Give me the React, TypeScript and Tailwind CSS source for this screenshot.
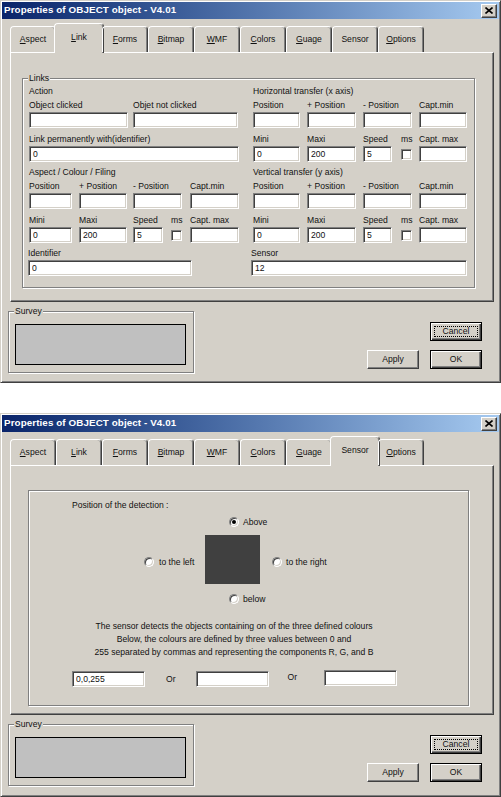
import React from "react";

const raised =
  "border border-t-white border-l-white border-r-[#404040] border-b-[#404040] shadow-[inset_-1px_-1px_0_#808080]";
const sunken =
  "border border-t-[#808080] border-l-[#808080] border-r-white border-b-white shadow-[inset_1px_1px_0_#404040,inset_-1px_-1px_0_#d4d0c8]";
const etched = "border border-[#808080] shadow-[1px_1px_0_#fff,inset_1px_1px_0_#fff]";

const TABS: [string, string][] = [
  ["A", "spect"],
  ["L", "ink"],
  ["F", "orms"],
  ["B", "itmap"],
  ["W", "MF"],
  ["C", "olors"],
  ["G", "uage"],
  ["", "Sensor"],
  ["O", "ptions"],
];

const TextBox = ({ className = "", value = "" }: { className?: string; value?: string }) => (
  <input
    readOnly
    value={value}
    className={`h-[16px] bg-white pl-[3px] text-[8.6px] leading-[14px] outline-none ${sunken} ${className}`}
  />
);

const Field = ({ wrap = "", label, input, value }: { wrap?: string; label: string; input: string; value?: string }) => (
  <div className={wrap}>
    <div className="h-[14px] leading-[14px] whitespace-nowrap">{label}</div>
    <TextBox className={input} value={value} />
  </div>
);

const Ms = ({ wrap }: { wrap: string }) => (
  <div className={wrap}>
    <div className="h-[14px] leading-[14px]">ms</div>
    <div className="h-[16px] flex items-center">
      <div className={`w-[11px] h-[11px] bg-white ${sunken}`} />
    </div>
  </div>
);

const Radio = ({ checked = false }: { checked?: boolean }) => (
  <div
    className={`w-[10px] h-[10px] shrink-0 rounded-full bg-white flex items-center justify-center ${sunken}`}
  >
    {checked && <div className="w-[4px] h-[4px] rounded-full bg-black" />}
  </div>
);

const Btn = ({ label, focus = false, dflt = false }: { label: string; focus?: boolean; dflt?: boolean }) => (
  <button
    className={`relative w-[52px] h-[19px] bg-[#d4d0c8] text-[8.6px] ${
      dflt || focus
        ? "border border-black shadow-[inset_1px_1px_0_#fff,inset_-1px_-1px_0_#404040,inset_-2px_-2px_0_#808080]"
        : raised
    }`}
  >
    {focus && <span className="absolute inset-[3px] border border-dotted border-black" />}
    {label}
  </button>
);

function Dialog({ active, height, children }: { active: number; height: string; children: React.ReactNode }) {
  return (
    <div
      className={`w-[501px] ${height} bg-[#d4d0c8] border border-t-[#d4d0c8] border-l-[#d4d0c8] border-r-[#404040] border-b-[#404040] shadow-[inset_1px_1px_0_#fff,inset_-1px_-1px_0_#808080] p-[1px] flex flex-col`}
    >
      {/* title bar */}
      <div className="h-[17px] flex items-center pl-[2px] pr-[2px] bg-linear-to-r from-[#0a246a] to-[#a6caf0]">
        <span className="text-white font-bold text-[9.8px] tracking-[0.1px]">Properties of OBJECT object - V4.01</span>
        <div className={`ml-auto w-[16px] h-[14px] bg-[#d4d0c8] flex items-center justify-center ${raised}`}>
          <svg width="8" height="7" viewBox="0 0 8 7">
            <path d="M0.5 0.5 L7.5 6.5 M7.5 0.5 L0.5 6.5" stroke="#000" strokeWidth="1.6" />
          </svg>
        </div>
      </div>

      {/* tabs */}
      <div className="h-[33px] flex items-end pl-[8px] relative z-10">
        {TABS.map(([u, rest], i) =>
          i === active ? (
            <div
              key={i}
              className="w-[50px] -mx-[2px] h-[30px] -mb-[1px] pb-[2px] bg-[#d4d0c8] border border-b-0 border-t-white border-l-white border-r-[#404040] rounded-t-[4px] shadow-[inset_-1px_0_0_#808080] flex items-center justify-center"
            >
              <span className="underline decoration-1 underline-offset-1">{u}</span>
              {rest}
            </div>
          ) : (
            <div
              key={i}
              className="w-[46px] h-[26px] border border-b-0 border-t-white border-l-white border-r-[#404040] rounded-t-[4px] shadow-[inset_-1px_0_0_#808080] flex items-center justify-center"
            >
              <span className="underline decoration-1 underline-offset-1">{u}</span>
              {rest}
            </div>
          )
        )}
      </div>

      {/* panel */}
      <div className={`h-[250px] w-[484px] ml-[8px] ${raised}`}>{children}</div>

      {/* bottom */}
      <div className="flex">
        <div className={`relative ml-[6px] mt-[9px] w-[186px] h-[62px] ${etched}`}>
          <span className="absolute -top-[7px] left-[5px] px-[1px] bg-[#d4d0c8] leading-[12px]">Survey</span>
          <div className="mt-[12px] ml-[6px] w-[171px] h-[41px] bg-[#c0c0c0] border border-black" />
        </div>
        <div className="ml-auto mr-[17px] mt-[20px] flex flex-col items-end gap-[9px]">
          <Btn label="Cancel" focus />
          <div className="flex gap-[11px]">
            <Btn label="Apply" />
            <Btn label="OK" dflt />
          </div>
        </div>
      </div>
    </div>
  );
}

function LinkTab() {
  return (
    <div className={`relative ml-[11px] mt-[25px] w-[453px] h-[210px] ${etched}`}>
      <span className="absolute -top-[7px] left-[5px] px-[1px] bg-[#d4d0c8] leading-[12px]">Links</span>
      <div className="flex pl-[6px] pt-[5px] gap-[14px]">
        <div className="w-[210px]">
          <div className="h-[14px] leading-[14px]">Action</div>
          <div className="flex">
            <Field wrap="w-[104px]" label="Object clicked" input="w-[99px]" />
            <Field wrap="w-[106px]" label="Objet not clicked" input="w-[105px]" />
          </div>
          <div className="mt-[4px]">
            <Field label="Link permanently with(identifier)" input="w-[210px]" value="0" />
          </div>
          <div className="mt-[4px] h-[13px] leading-[13px]">Aspect / Colour / Filing</div>
          <div className="flex">
            <Field wrap="w-[50px]" label="Position" input="w-[43px]" />
            <Field wrap="w-[54px]" label="+ Position" input="w-[48px]" />
            <Field wrap="w-[57px]" label="- Position" input="w-[49px]" />
            <Field wrap="w-[49px]" label="Capt.min" input="w-[49px]" />
          </div>
          <div className="mt-[4px] flex">
            <Field wrap="w-[50px]" label="Mini" input="w-[43px]" value="0" />
            <Field wrap="w-[54px]" label="Maxi" input="w-[48px]" value="200" />
            <Field wrap="w-[38px]" label="Speed" input="w-[30px]" value="5" />
            <Ms wrap="w-[19px]" />
            <Field wrap="w-[49px]" label="Capt. max" input="w-[49px]" />
          </div>
          <div className="mt-[3px] -ml-[1px]">
            <Field label="Identifier" input="w-[164px]" value="0" />
          </div>
        </div>

        <div className="w-[214px]">
          <div className="h-[14px] leading-[14px]">Horizontal transfer (x axis)</div>
          <div className="flex">
            <Field wrap="w-[54px]" label="Position" input="w-[47px]" />
            <Field wrap="w-[56px]" label="+ Position" input="w-[49px]" />
            <Field wrap="w-[56px]" label="- Position" input="w-[49px]" />
            <Field wrap="w-[48px]" label="Capt.min" input="w-[48px]" />
          </div>
          <div className="mt-[4px] flex">
            <Field wrap="w-[54px]" label="Mini" input="w-[47px]" value="0" />
            <Field wrap="w-[56px]" label="Maxi" input="w-[49px]" value="200" />
            <Field wrap="w-[38px]" label="Speed" input="w-[29px]" value="5" />
            <Ms wrap="w-[18px]" />
            <Field wrap="w-[48px]" label="Capt. max" input="w-[48px]" />
          </div>
          <div className="mt-[4px] h-[13px] leading-[13px]">Vertical transfer (y axis)</div>
          <div className="flex">
            <Field wrap="w-[54px]" label="Position" input="w-[47px]" />
            <Field wrap="w-[56px]" label="+ Position" input="w-[49px]" />
            <Field wrap="w-[56px]" label="- Position" input="w-[49px]" />
            <Field wrap="w-[48px]" label="Capt.min" input="w-[48px]" />
          </div>
          <div className="mt-[4px] flex">
            <Field wrap="w-[54px]" label="Mini" input="w-[47px]" value="0" />
            <Field wrap="w-[56px]" label="Maxi" input="w-[49px]" value="200" />
            <Field wrap="w-[38px]" label="Speed" input="w-[29px]" value="5" />
            <Ms wrap="w-[18px]" />
            <Field wrap="w-[48px]" label="Capt. max" input="w-[48px]" />
          </div>
          <div className="mt-[3px] -ml-[2px]">
            <Field label="Sensor" input="w-[216px]" value="12" />
          </div>
        </div>
      </div>
    </div>
  );
}

function SensorTab() {
  return (
    <div className={`ml-[17px] mt-[24px] w-[441px] h-[216px] pl-[43px] pt-[7px] ${etched}`}>
      <div className="w-[324px]">
        <div className="h-[14px] leading-[14px]">Position of the detection :</div>
        <div className="mt-[3px] h-[14px] flex items-center pl-[157px] gap-[4px]">
          <Radio checked />
          <span>Above</span>
        </div>
        <div className="mt-[6px] h-[49px] flex items-center">
          <div className="ml-[72px] w-[61px] mt-[5px] flex items-center gap-[5px]">
            <Radio />
            <span>to the left</span>
          </div>
          <div className="w-[55px] h-[49px] bg-[#404040]" />
          <div className="ml-[12px] mt-[5px] flex items-center gap-[4px]">
            <Radio />
            <span>to the right</span>
          </div>
        </div>
        <div className="mt-[8px] h-[14px] flex items-center pl-[157px] gap-[4px]">
          <Radio />
          <span>below</span>
        </div>
        <div className="mt-[14px] text-center leading-[13px] whitespace-nowrap">
          <div>The sensor detects the objects containing on of the three defined colours</div>
          <div>Below, the colours are defined by three values between 0 and</div>
          <div>255 separated by commas and representing the components R, G, and B</div>
        </div>
        <div className="mt-[12px] flex items-center">
          <TextBox className="w-[73px]" value="0,0,255" />
          <span className="ml-[21px]">Or</span>
          <TextBox className="ml-[20px] w-[73px]" />
          <span className="ml-[19px] -mt-[3px]">Or</span>
          <TextBox className="ml-[27px] w-[73px] -mt-[2px]" />
        </div>
      </div>
    </div>
  );
}

export default function App() {
  return (
    <div className="w-[501px] bg-white text-[#111] text-[8.6px] font-['Liberation_Sans',Arial,sans-serif]">
      <Dialog active={1} height="h-[383px]">
        <LinkTab />
      </Dialog>
      <div className="h-[30px]" />
      <Dialog active={7} height="h-[384px]">
        <SensorTab />
      </Dialog>
    </div>
  );
}
